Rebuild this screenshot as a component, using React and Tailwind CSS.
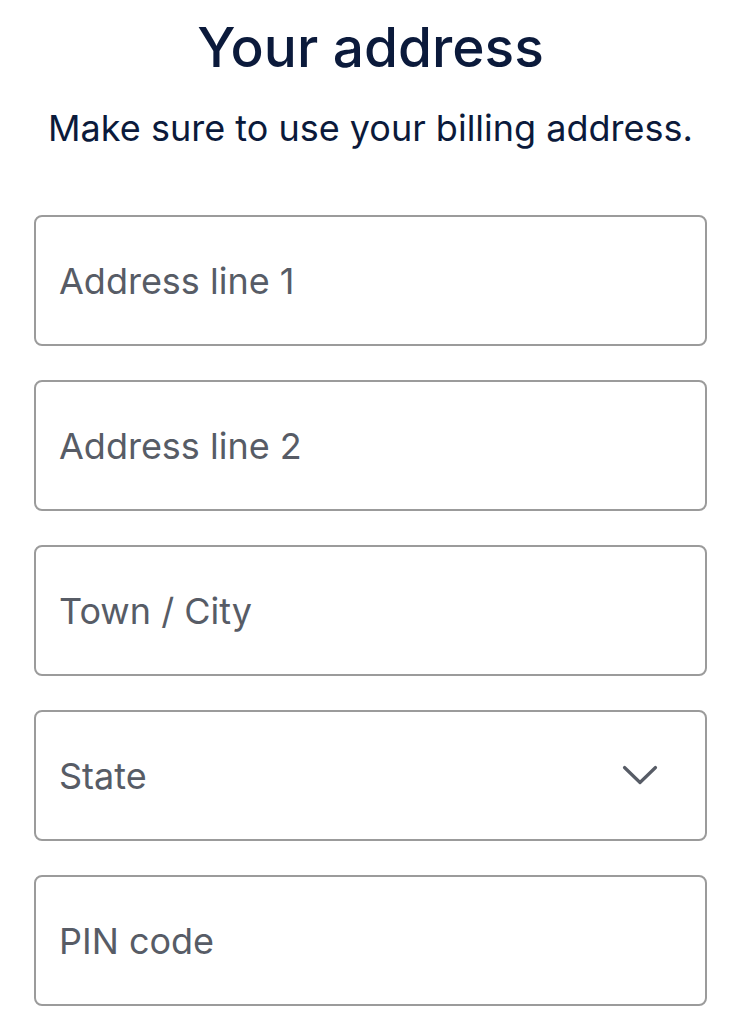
import React from "react";

const Field = ({ label, select }) => (
  <div className="flex h-[131px] items-center justify-between rounded-[8px] border-2 border-[#9b9b9b] bg-white pl-[23px] pr-[47px]">
    <span className="text-[36px] leading-[44px] text-[#575c66]">{label}</span>
    {select && (
      <svg width="36" height="21" viewBox="0 0 36 21" fill="none">
        <path d="M2.5 2.5 L18 17.5 L33.5 2.5" stroke="#575c66" strokeWidth="3.2" strokeLinecap="round" strokeLinejoin="round" />
      </svg>
    )}
  </div>
);

export default function App() {
  return (
    <div className="min-h-[1024px] w-[741px] bg-white" style={{ fontFamily: "Inter, 'Noto Sans', sans-serif" }}>
      <div className="flex flex-col items-center pt-[14px]">
        <h1 className="text-[55px] font-medium leading-[66px] text-[#0b1a3b]">Your address</h1>
        <p className="mt-[26px] text-[36px] leading-[44px] text-[#0b1a3b]">Make sure to use your billing address.</p>
      </div>
      <div className="mt-[65px] flex flex-col gap-[34px] pl-[34px] pr-[34px]">
        <Field label="Address line 1" />
        <Field label="Address line 2" />
        <Field label="Town / City" />
        <Field label="State" select />
        <Field label="PIN code" />
      </div>
    </div>
  );
}
